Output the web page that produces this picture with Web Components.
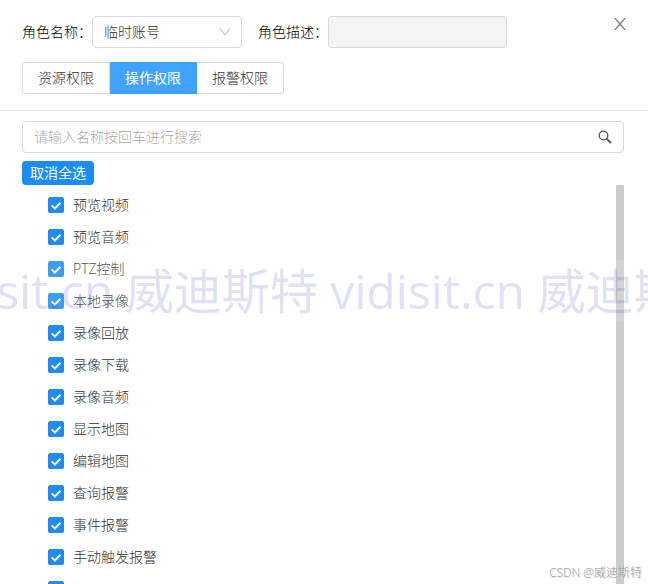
<!DOCTYPE html>
<html lang="zh-CN">
<head>
<meta charset="utf-8">
<title>角色权限</title>
<style>
    body {
        margin: 0;
        background: #fff;
        color: #333;
        font: 300 14px/20px 'Open Sans', 'Noto Sans CJK SC', sans-serif;
    }
</style>
</head>
<body>
<role-dialog></role-dialog>

<script>
(function () {
    // attaches an open shadow root filled with the given markup
    function render(host, html) {
        const template = document.createElement('template');
        template.innerHTML = html;
        const root = host.attachShadow({ mode: 'open' });
        root.appendChild(template.content.cloneNode(true));
        return root;
    }

    class RoleSelect extends HTMLElement {
        constructor() {
            super();
            render(this, `<style>
                :host { display: flex; align-items: center; }
                label { color: #000; white-space: nowrap; }
                .box { display: grid; align-items: center; width: 150px; }
                select, svg { grid-area: 1 / 1; }
                select {
                    appearance: none;
                    box-sizing: border-box;
                    width: 100%;
                    height: 32px;
                    padding: 0 32px 0 11px;
                    border: 1px solid #d9d9d9;
                    border-radius: 4px;
                    background: #fff;
                    font: inherit;
                    color: inherit;
                }
                svg { justify-self: end; margin-right: 11px; pointer-events: none; }
            </style>
            <label for="name">角色名称：</label>
            <div class="box">
                <select id="name"><option>临时账号</option></select>
                <svg width="12" height="12" viewBox="0 0 12 12" fill="none" stroke="#c0c4cc" stroke-width="1.2"><path d="M1 2.5l5 6.5 5-6.5"/></svg>
            </div>`);
        }
    }

    class RoleInput extends HTMLElement {
        constructor() {
            super();
            render(this, `<style>
                :host { display: flex; align-items: center; }
                label { color: #000; white-space: nowrap; }
                input {
                    box-sizing: border-box;
                    width: 100%;
                    min-width: 0;
                    height: 32px;
                    padding: 0 11px;
                    border: 1px solid #d9d9d9;
                    border-radius: 4px;
                    background: #f5f5f5;
                    font: inherit;
                }
            </style>
            <label for="desc">角色描述：</label>
            <input id="desc" type="text" disabled>`);
        }
    }

    class PermissionTabs extends HTMLElement {
        constructor() {
            super();
            const root = render(this, `<style>
                :host { display: flex; }
                button {
                    height: 32px;
                    padding: 0 15px;
                    border: 1px solid #d9d9d9;
                    border-left-width: 0;
                    background: #fff;
                    font: inherit;
                    color: inherit;
                    cursor: pointer;
                }
                button:first-of-type { border-left-width: 1px; border-radius: 4px 0 0 4px; }
                button:last-of-type { border-radius: 0 4px 4px 0; }
                button[aria-pressed="true"] {
                    border-color: #40a4ff;
                    background: #40a4ff;
                    color: #fff;
                    font-weight: 400;
                }
            </style>
            <button type="button" aria-pressed="false">资源权限</button>
            <button type="button" aria-pressed="true">操作权限</button>
            <button type="button" aria-pressed="false">报警权限</button>`);
            const buttons = root.querySelectorAll('button');
            buttons.forEach((button) => {
                button.addEventListener('click', () => {
                    buttons.forEach((b) => b.setAttribute('aria-pressed', b === button));
                });
            });
        }
    }

    class SearchBox extends HTMLElement {
        constructor() {
            super();
            render(this, `<style>
                :host {
                    display: flex;
                    align-items: center;
                    height: 30px;
                    padding: 0 11px;
                    border: 1px solid #d9d9d9;
                    border-radius: 4px;
                }
                input {
                    flex: 1;
                    min-width: 0;
                    padding: 0;
                    border: 0;
                    outline: 0;
                    background: none;
                    font: inherit;
                    color: inherit;
                }
                input::placeholder { color: #a8a8a8; }
                button { display: flex; padding: 0; border: 0; background: none; cursor: pointer; }
            </style>
            <input type="text" placeholder="请输入名称按回车进行搜索" aria-label="搜索">
            <button type="button" aria-label="搜索">
                <svg width="14" height="14" viewBox="0 0 14 14" fill="none" stroke="#555"><circle cx="5.5" cy="5.5" r="4.3" stroke-width="1.3"/><path d="M8.6 8.6l4.4 4.4" stroke-width="1.9"/></svg>
            </button>`);
        }
    }

    class CheckItem extends HTMLElement {
        constructor() {
            super();
            render(this, `<style>
                :host { display: block; }
                label { display: flex; align-items: center; gap: 9px; height: 32px; }
                .box { display: grid; }
                input, svg { grid-area: 1 / 1; width: 16px; height: 16px; margin: 0; }
                input {
                    appearance: none;
                    box-sizing: border-box;
                    border: 1px solid #d9d9d9;
                    border-radius: 2px;
                    background: #fff;
                }
                input:checked { border-color: #1c8cf0; background: #1c8cf0; }
                svg { pointer-events: none; }
            </style>
            <label>
                <span class="box">
                    <input type="checkbox" checked>
                    <svg viewBox="0 0 16 16" fill="none" stroke="#fff" stroke-width="2"><path d="M3.6 8.4l3.2 3.2 5.6-5.8"/></svg>
                </span>
                <slot></slot>
            </label>`);
        }
    }

    class ScrollList extends HTMLElement {
        constructor() {
            super();
            render(this, `<style>
                :host { display: flex; min-height: 0; }
                .items {
                    flex: 1;
                    padding: 4px 0 0 26px;
                    overflow-y: auto;
                    scrollbar-width: none;
                }
                .thumb { width: 8px; border-radius: 1px 1px 0 0; background: #ccc; }
            </style>
            <div class="items"><slot></slot></div>
            <div class="thumb"></div>`);
        }
    }

    class PageWatermark extends HTMLElement {
        constructor() {
            super();
            render(this, `<style>
                :host {
                    position: absolute;
                    top: 260px;
                    left: 0;
                    right: 0;
                    display: flex;
                    justify-content: center;
                    overflow: hidden;
                    background: rgba(252, 255, 255, .15);
                    color: rgba(10, 20, 170, .15);
                    font: 400 48px/62px 'Open Sans', 'Noto Sans CJK SC', sans-serif;
                    white-space: nowrap;
                    pointer-events: none;
                }
            </style>
            <span><slot></slot></span>`);
        }
    }

    class RoleDialog extends HTMLElement {
        constructor() {
            super();
            const root = render(this, `<style>
                :host {
                    position: relative;
                    display: flex;
                    flex-direction: column;
                    height: 100vh;
                    overflow: hidden;
                }
                header {
                    display: flex;
                    justify-content: space-between;
                    align-items: flex-start;
                    padding: 16px 22px;
                    border-bottom: 1px solid #e4e4e4;
                }
                .fields { display: flex; gap: 16px; }
                role-input { width: 249px; }
                permission-tabs { margin-top: 14px; }
                .close { display: flex; padding: 2px 0; border: 0; background: none; cursor: pointer; }
                main {
                    flex: 1;
                    display: flex;
                    flex-direction: column;
                    align-items: stretch;
                    min-height: 0;
                    padding: 10px 24px 0 22px;
                }
                .toggle {
                    align-self: flex-start;
                    height: 24px;
                    margin-top: 8px;
                    padding: 0 8px;
                    border: 0;
                    border-radius: 4px;
                    background: #1c8cf8;
                    color: #fff;
                    font: inherit;
                    font-weight: 400;
                    cursor: pointer;
                }
                scroll-list { flex: 1; }
                .credit {
                    position: absolute;
                    right: 6px;
                    bottom: 2px;
                    color: #999;
                    font-size: 12px;
                    line-height: 18px;
                    text-shadow: 1px 1px 0 #e4e4e4;
                }
            </style>
            <header>
                <div>
                    <div class="fields">
                        <role-select></role-select>
                        <role-input></role-input>
                    </div>
                    <permission-tabs></permission-tabs>
                </div>
                <button class="close" type="button" aria-label="关闭">
                    <svg width="12" height="12" viewBox="0 0 12 12" fill="none" stroke="#888" stroke-width="1.5"><path d="M.8 0l10.4 12M11.2 0L.8 12"/></svg>
                </button>
            </header>
            <main>
                <search-box></search-box>
                <button class="toggle" type="button">取消全选</button>
                <scroll-list></scroll-list>
            </main>
            <page-watermark>vidisit.cn 威迪斯特 vidisit.cn 威迪斯特</page-watermark>
            <div class="credit">CSDN @威迪斯特</div>`);

            const names = ['预览视频', '预览音频', 'PTZ控制', '本地录像', '录像回放', '录像下载', '录像音频',
                '显示地图', '编辑地图', '查询报警', '事件报警', '手动触发报警', ''];
            const list = root.querySelector('scroll-list');
            names.forEach((name) => {
                const item = document.createElement('check-item');
                item.textContent = name;
                list.appendChild(item);
            });
        }
    }

    window.customElements.define('role-select', RoleSelect);
    window.customElements.define('role-input', RoleInput);
    window.customElements.define('permission-tabs', PermissionTabs);
    window.customElements.define('search-box', SearchBox);
    window.customElements.define('check-item', CheckItem);
    window.customElements.define('scroll-list', ScrollList);
    window.customElements.define('page-watermark', PageWatermark);
    window.customElements.define('role-dialog', RoleDialog);
})();
</script>
</body>
</html>
